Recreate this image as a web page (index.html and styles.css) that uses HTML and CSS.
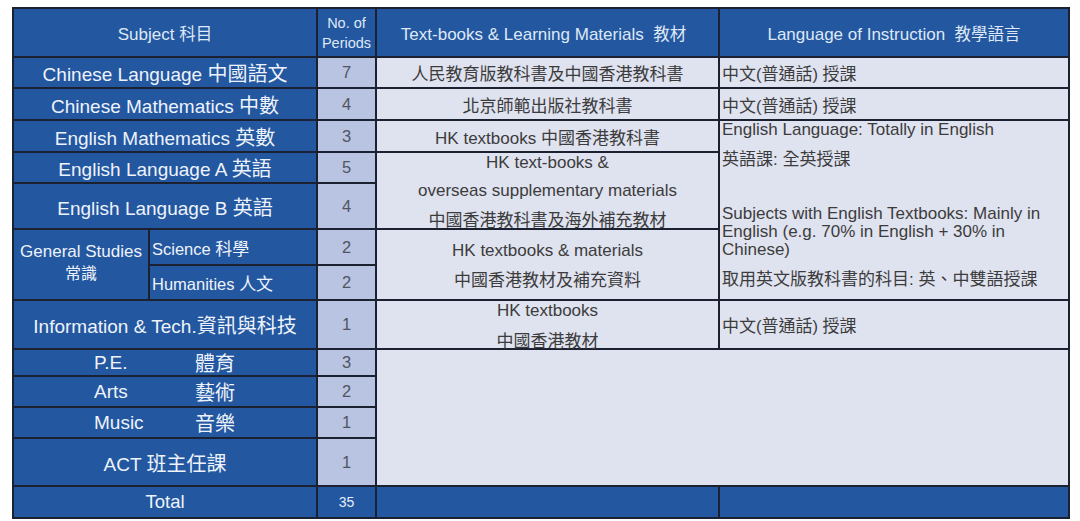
FILE: index.html
```html
<!DOCTYPE html>
<html lang="zh-Hant">
<head>
<meta charset="utf-8">
<title>Curriculum</title>
<link rel="stylesheet" href="styles.css">
</head>
<body>
<div class="table">
  <div class="cell head span2"><span class="t">Subject <span class="zh">科目</span></span></div>
  <div class="cell head small"><span class="t">No. of<br>Periods</span></div>
  <div class="cell head hmat"><span class="t">Text-books &amp; Learning Materials&nbsp; <span class="zh">教材</span></span></div>
  <div class="cell head"><span class="t">Language of Instruction&nbsp; <span class="zh">教學語言</span></span></div>

  <div class="cell subj span2"><span class="t">Chinese Language <span class="zh">中國語文</span></span></div>
  <div class="cell num">7</div>
  <div class="cell mat"><span class="t zh">人民教育版教科書及中國香港教科書</span></div>
  <div class="cell lang"><span class="t"><span class="zh">中文</span>(<span class="zh">普通話</span>) <span class="zh">授課</span></span></div>

  <div class="cell subj span2"><span class="t">Chinese Mathematics <span class="zh">中數</span></span></div>
  <div class="cell num">4</div>
  <div class="cell mat"><span class="t zh">北京師範出版社教科書</span></div>
  <div class="cell lang"><span class="t"><span class="zh">中文</span>(<span class="zh">普通話</span>) <span class="zh">授課</span></span></div>

  <div class="cell subj span2"><span class="t">English Mathematics <span class="zh">英數</span></span></div>
  <div class="cell num">3</div>
  <div class="cell mat"><span class="t">HK textbooks <span class="zh">中國香港教科書</span></span></div>
  <div class="cell lang big">
    <p class="l1">English Language: Totally in English</p>
    <p class="l2"><span class="zh">英語課</span>: <span class="zh">全英授課</span></p>
    <p class="l3">Subjects with English Textbooks: Mainly in English (e.g. 70% in English + 30% in Chinese)</p>
    <p class="l4"><span class="zh">取用英文版教科書的科目</span>: <span class="zh">英、中雙語授課</span></p>
  </div>

  <div class="cell subj span2"><span class="t">English Language A <span class="zh">英語</span></span></div>
  <div class="cell num">5</div>
  <div class="cell mat multi rows2">
    <span>HK text-books &amp;</span>
    <span>overseas supplementary materials</span>
    <span class="zh">中國香港教科書及海外補充教材</span>
  </div>

  <div class="cell subj span2"><span class="t">English Language B <span class="zh">英語</span></span></div>
  <div class="cell num">4</div>

  <div class="cell gs rows2"><span>General Studies</span><span class="zh">常識</span></div>
  <div class="cell sub"><span class="t">Science <span class="zh">科學</span></span></div>
  <div class="cell num">2</div>
  <div class="cell mat multi rows2">
    <span>HK textbooks &amp; materials</span>
    <span class="zh">中國香港教材及補充資料</span>
  </div>

  <div class="cell sub"><span class="t">Humanities <span class="zh">人文</span></span></div>
  <div class="cell num">2</div>

  <div class="cell subj span2"><span class="t">Information &amp; Tech.<span class="zh">資訊與科技</span></span></div>
  <div class="cell num">1</div>
  <div class="cell mat multi tight">
    <span>HK textbooks</span>
    <span class="zh">中國香港教材</span>
  </div>
  <div class="cell lang"><span class="t"><span class="zh">中文</span>(<span class="zh">普通話</span>) <span class="zh">授課</span></span></div>

  <div class="cell subj span2 pair"><span class="en">P.E.</span><span class="zh">體育</span></div>
  <div class="cell num">3</div>
  <div class="cell empty"></div>

  <div class="cell subj span2 pair"><span class="en">Arts</span><span class="zh">藝術</span></div>
  <div class="cell num">2</div>

  <div class="cell subj span2 pair"><span class="en">Music</span><span class="zh">音樂</span></div>
  <div class="cell num">1</div>

  <div class="cell subj span2"><span class="t">ACT <span class="zh">班主任課</span></span></div>
  <div class="cell num">1</div>

  <div class="cell subj span2 totlabel"><span class="t">Total</span></div>
  <div class="cell num total">35</div>
  <div class="cell total"></div>
  <div class="cell total"></div>
</div>
</body>
</html>
```

FILE: styles.css
```css
* { box-sizing: border-box; }

html, body {
  margin: 0;
  padding: 0;
  background: #ffffff;
}

body {
  padding: 7px 0 0 12px;
  font-family: "Liberation Sans", "Noto Sans CJK TC", sans-serif;
}

.zh {
  font-family: "Noto Sans CJK TC", sans-serif;
}

.t { white-space: pre-wrap; }

.table {
  display: grid;
  width: 1058px;
  grid-template-columns: 134px 166px 57px 341px 348px;
  grid-template-rows: 47px 29px 30px 30px 29px 44px 34px 33px 47px 25px 29px 29px 46px 30px;
  gap: 2px;
  padding: 2px;
  background: #1b2130;
}

.cell {
  display: flex;
  align-items: center;
  justify-content: center;
  background: #dfe2ef;
  color: #3c3c3c;
  white-space: nowrap;
}

.span2 { grid-column: span 2; }
.rows2 { grid-row: span 2; }

.head {
  background: #2357a0;
  color: #dfe8f6;
  font-size: 17px;
}

.head.small {
  font-size: 14.5px;
  line-height: 20px;
  text-align: center;
}

.head .zh { font-size: 16.5px; }

.hmat { padding-right: 8px; }

.subj {
  background: #2357a0;
  color: #eef3fb;
  font-size: 19px;
}

.subj .zh { font-size: 20px; }

.totlabel { font-size: 18.5px; }

.gs {
  background: #2357a0;
  color: #eef3fb;
  font-size: 17px;
  line-height: 21px;
  flex-direction: column;
  padding-bottom: 6px;
}

.gs .zh { font-size: 16px; }

.sub {
  background: #2357a0;
  color: #eef3fb;
  font-size: 16.5px;
  justify-content: flex-start;
  padding-left: 2px;
}

.sub .zh { font-size: 17px; }

.pair {
  justify-content: flex-start;
  padding-left: 80px;
}

.pair .en {
  display: inline-block;
  width: 101px;
}

.num {
  background: #b9c3e2;
  color: #50555f;
  font-size: 16.5px;
}

.num.total {
  background: #2357a0;
  color: #e6edf8;
  font-size: 14px;
}

.total { background: #2357a0; }

.mat {
  font-size: 17px;
}

.mat .zh { font-size: 17px; }

.multi {
  flex-direction: column;
  line-height: 28px;
}

.multi.tight { line-height: 29px; }

.lang {
  justify-content: flex-start;
  padding-left: 2px;
  font-size: 16.5px;
}

.lang .zh { font-size: 17px; }

.big {
  grid-row: span 5;
  flex-direction: column;
  align-items: flex-start;
  justify-content: flex-start;
  white-space: normal;
  font-size: 17px;
  padding-right: 4px;
}

.big p { margin: 0; }

.big .l1 { line-height: 18px; }
.big .l2 { margin-top: 9px; line-height: 20px; }
.big .l3 { margin-top: 35px; line-height: 18px; }
.big .l4 { margin-top: 9px; line-height: 20px; }

.empty {
  grid-column: span 2;
  grid-row: span 4;
}
```
